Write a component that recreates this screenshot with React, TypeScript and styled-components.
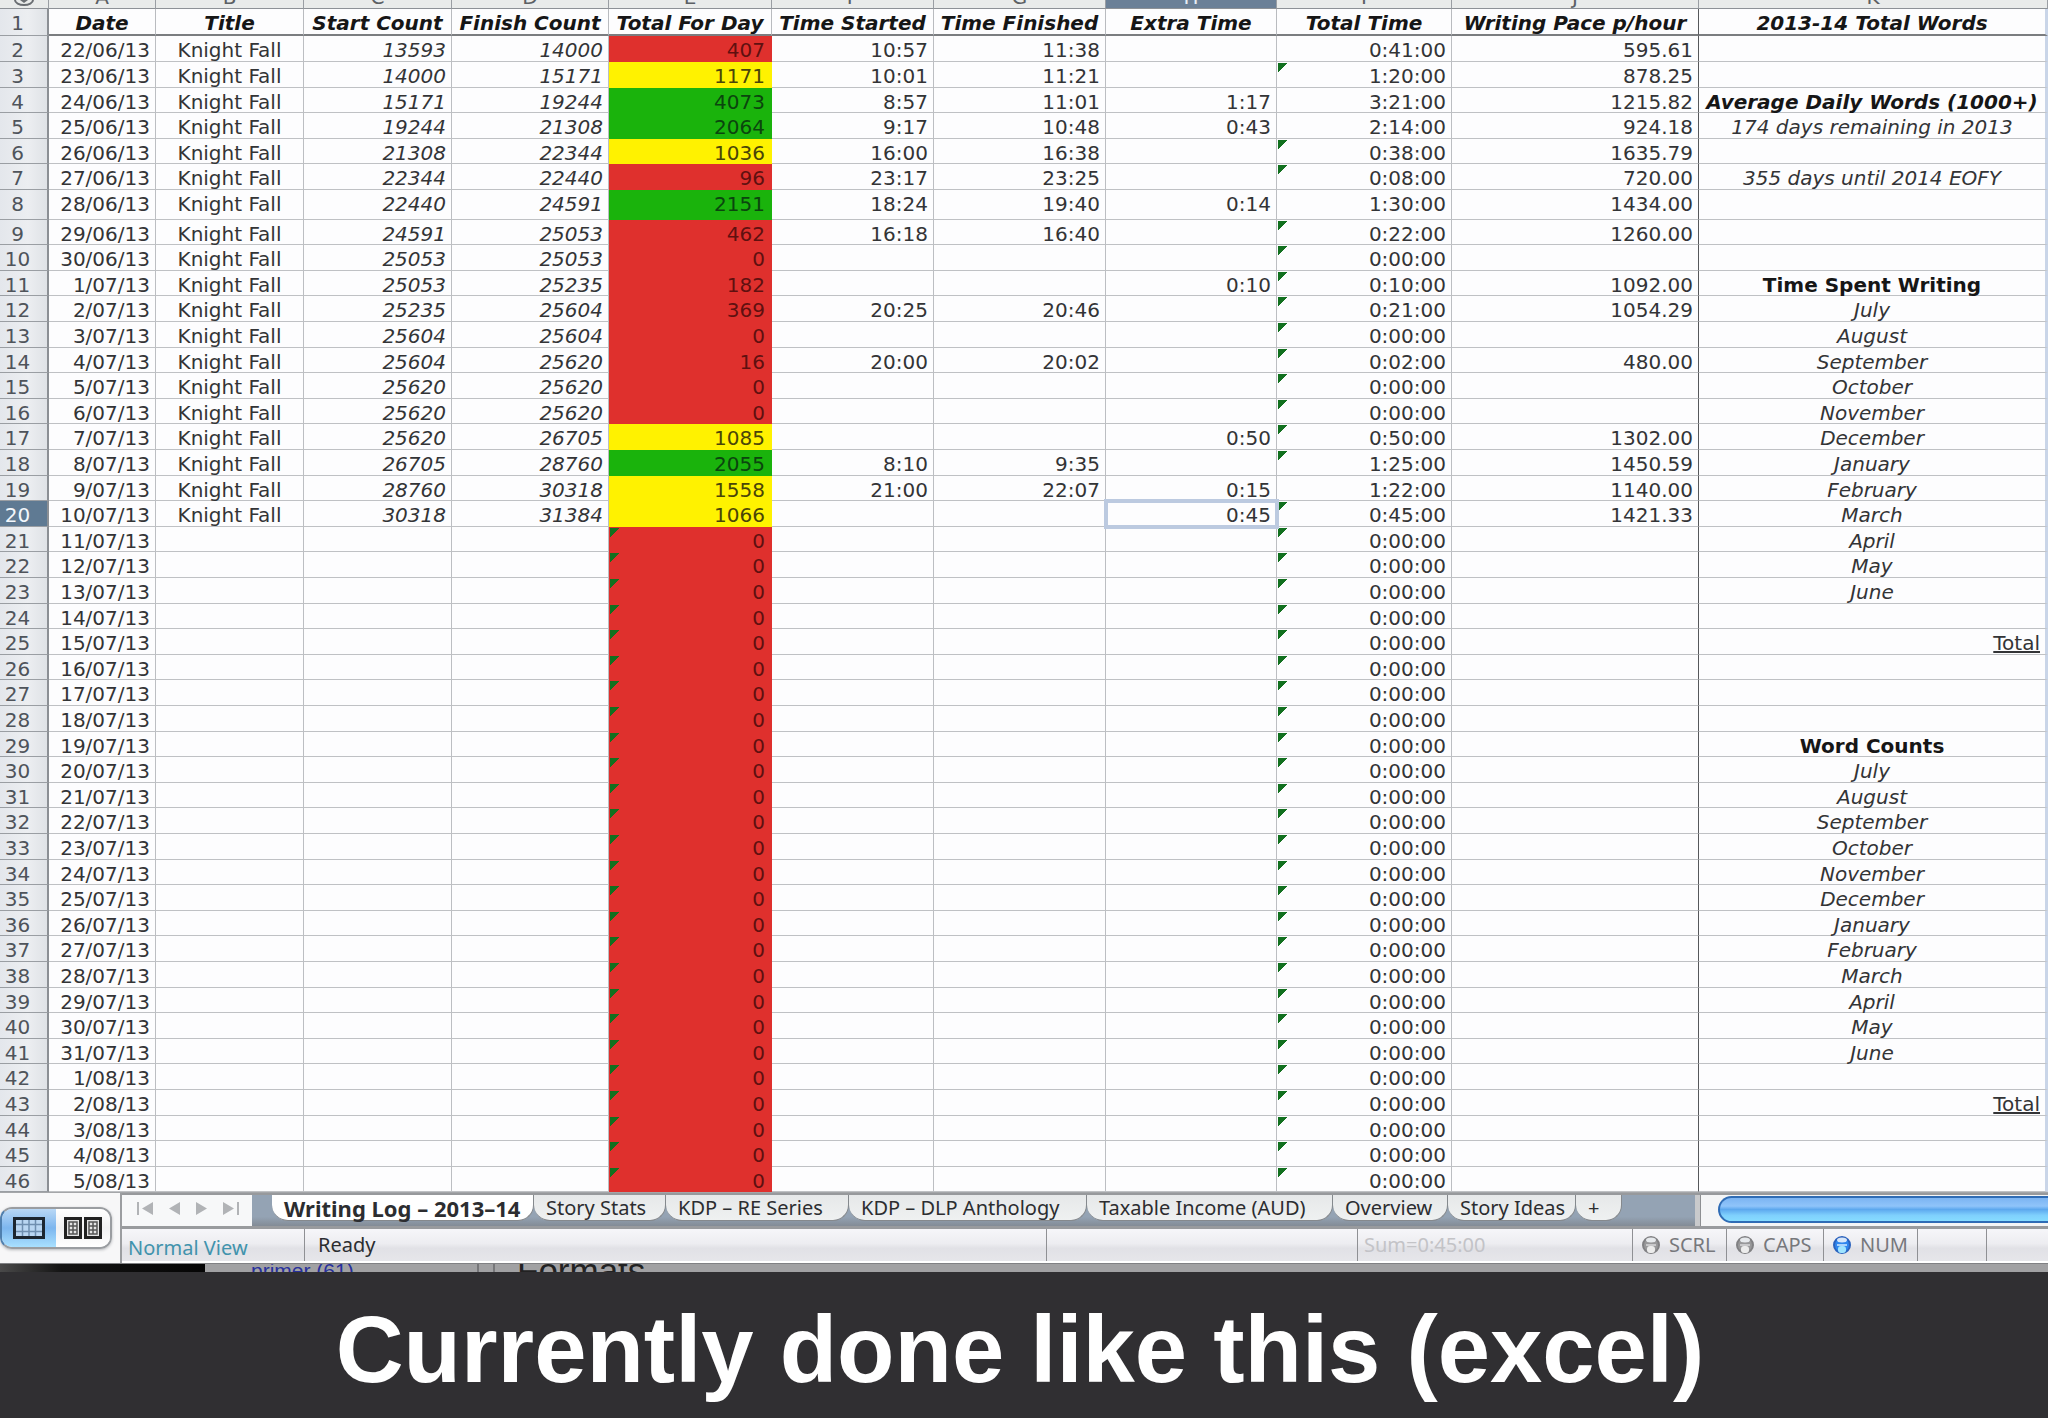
import React from "react";
import styled, { createGlobalStyle, css } from "styled-components";

const GlobalStyle = createGlobalStyle`
  *, *::before, *::after { box-sizing: border-box; }
  body { margin: 0; background: #302f32; }
  button { font: inherit; color: inherit; border: 0; padding: 0; background: none; }
`;

const sheetFont = `"DejaVu Sans", Verdana, sans-serif`;
const chromeFont = `"Noto Sans", "Lucida Grande", sans-serif`;

type Align = "left" | "center" | "right";
type Fill = "red" | "yellow" | "green";

const fills: Record<Fill, { back: string; ink: string }> = {
  red: { back: "#df302d", ink: "#5f1010" },
  yellow: { back: "#fff200", ink: "#4a4508" },
  green: { back: "#1ab30c", ink: "#0b450e" },
};

const Page = styled.main`
  display: flex;
  flex-direction: column;
  min-height: 100vh;
  overflow: hidden;
`;

/* ---------- sheet ---------- */

const Sheet = styled.table`
  width: 100%;
  table-layout: fixed;
  border-collapse: separate;
  border-spacing: 0;
  background: #fdfdfe;
  color: #333436;
  font: 20px/20px ${sheetFont};
  white-space: nowrap;
`;

const Column = styled.col<{ $width?: number }>`
  width: ${(p) => (p.$width ? `${p.$width}px` : "auto")};
`;

const Letter = styled.th<{ $active?: boolean }>`
  height: 9px;
  padding: 0;
  border-right: 1px solid #9a9ea3;
  border-bottom: 1px solid #8d9196;
  background: ${(p) => (p.$active ? "#6b8097" : "#e9ebea")};
  color: ${(p) => (p.$active ? "#e8eef5" : "#5c6064")};
  font-weight: 400;
`;

const LetterClip = styled.div`
  display: flex;
  align-items: flex-end;
  justify-content: center;
  height: 8px;
  overflow: hidden;
  line-height: 22px;
`;

const RowNumber = styled.th<{ $active?: boolean }>`
  padding: 4px 12px 0 0;
  border-right: 2px solid #8b8f94;
  border-bottom: 1px solid #9a9ea3;
  background: ${(p) => (p.$active ? "#5f7a93" : "linear-gradient(90deg, #e4e7ec, #eceef1 60%, #dfe2e6)")};
  color: ${(p) => (p.$active ? "#f3f7fb" : "#4f545b")};
  font-weight: 400;
  text-align: center;
  vertical-align: top;
`;

const Title = styled.th`
  padding: 4px 0 0;
  border-right: 1px solid #b9bbbf;
  border-bottom: 2px solid #7b7d80;
  color: #161616;
  font-weight: 700;
  font-style: italic;
  text-align: center;
  vertical-align: top;
  &:nth-last-child(2) { border-right-color: #56585b; }
  &:last-child { border-right: 3px solid #c9d5e8; }
`;

const Cell = styled.td<{
  $align?: Align;
  $italic?: boolean;
  $bold?: boolean;
  $underline?: boolean;
  $fill?: Fill;
  $flag?: boolean;
  $selected?: boolean;
  $edge?: boolean;
}>`
  padding: 4px 5px 0;
  border-right: 1px solid ${(p) => (p.$edge ? "#56585b" : "#bcbec2")};
  border-bottom: 1px solid #bfc1c4;
  text-align: ${(p) => p.$align ?? "right"};
  vertical-align: top;
  font-style: ${(p) => (p.$italic ? "italic" : "normal")};
  font-weight: ${(p) => (p.$bold ? 700 : 400)};
  text-decoration: ${(p) => (p.$underline ? "underline" : "none")};
  &:last-child { border-right: 3px solid #c9d5e8; }
  ${(p) => p.$bold && css`color: #161616;`}
  ${(p) =>
    p.$fill &&
    css`
      padding-right: 6px;
      background-color: ${fills[p.$fill].back};
      border-color: ${fills[p.$fill].back};
      color: ${fills[p.$fill].ink};
    `}
  ${(p) =>
    p.$flag &&
    css`
      background-image: linear-gradient(135deg, #12701f 7px, transparent 7px);
      background-repeat: no-repeat;
      background-size: 10px 10px;
      background-position: 1px 1px;
    `}
  ${(p) =>
    p.$selected &&
    css`
      outline: 4px solid #bccae0;
      outline-offset: -2px;
    `}
`;

const Row = styled.tr<{ $tall?: boolean }>`
  height: ${(p) => (p.$tall ? 30 : 26)}px;
  &:nth-child(5n),
  &:nth-child(5n + 3) { height: 25px; }
`;

const TitleRow = styled.tr`
  height: 27px;
`;

/* ---------- footer ---------- */

const Footer = styled.footer`
  display: grid;
  grid-template-columns: 122px 1fr;
  grid-template-rows: 36px 34px;
  border-top: 1px solid #a4a6a9;
  color: #2c2d30;
  font: 20px/26px ${chromeFont};
  white-space: nowrap;
`;

const ViewPanel = styled.div`
  grid-row: 1 / 3;
  display: flex;
  align-items: center;
  border-right: 2px solid #9b9da0;
  background: #f7f7f8;
`;

const ViewSwitch = styled.div`
  display: flex;
  width: 112px;
  height: 42px;
  border: 2px solid #9a9da1;
  border-left-color: #4f7fae;
  border-radius: 12px;
  overflow: hidden;
  box-shadow: 0 1px 3px #b5b7ba;
`;

const ViewButton = styled.button<{ $on?: boolean }>`
  flex: 1;
  display: grid;
  place-items: center;
  background: ${(p) =>
    p.$on
      ? "linear-gradient(#b9d8f6, #7db6ee 50%, #a8e0ff)"
      : "linear-gradient(#ffffff, #f1f1f2 50%, #ffffff)"};
`;

const TabBar = styled.div`
  display: flex;
  align-items: stretch;
  min-width: 0;
  border-top: 2px solid #97999c;
  border-bottom: 3px solid #999b9e;
  background: #94a3b4;
`;

const PageButtons = styled.div`
  display: flex;
  align-items: center;
  justify-content: space-between;
  width: 130px;
  padding: 0 12px 4px 14px;
  background: #f7f8f9;
  color: #b1b3b6;
`;

const PageButton = styled.button`
  display: flex;
`;

const Tabs = styled.nav`
  display: flex;
  flex: 1;
  min-width: 0;
  padding: 0 0 5px 20px;
  background: linear-gradient(#94a3b4 70%, #838c96);
`;

const Tab = styled.button<{ $on?: boolean; $width: number }>`
  width: ${(p) => p.$width}px;
  padding-left: 12px;
  border-right: 1px solid #85898d;
  border-bottom: 1px solid #85898d;
  border-radius: 0 0 16px 16px;
  background: ${(p) => (p.$on ? "#ffffff" : "linear-gradient(#e6e8e9, #eff1f1)")};
  font-weight: ${(p) => (p.$on ? 700 : 400)};
  font-size: ${(p) => (p.$on ? 22 : 20)}px;
  text-align: left;
`;

const Track = styled.div`
  width: 353px;
  padding: 1px 0 1px 18px;
  border-left: 5px solid #c9cacc;
  background: #f4f5f6;
  box-shadow: inset 1px 0 0 #8d8f92;
`;

const Thumb = styled.div`
  height: 27px;
  border: 2px solid #2f6cb5;
  border-right: 0;
  border-radius: 14px 0 0 14px;
  background: linear-gradient(#7cb4f2, #8fc4fa 35%, #5da8ee 50%, #7fd0fd 75%, #86dcff);
`;

const StatusBar = styled.div`
  display: flex;
  min-width: 0;
  border-bottom: 2px solid #ffffff;
  background: linear-gradient(#f6f6f9, #ededf1 45%, #e1e1e6 60%, #e6e6ea);
`;

const StatusCell = styled.div<{ $width?: number; $tone?: string; $pad?: number }>`
  display: flex;
  align-items: center;
  gap: 8px;
  ${(p) => (p.$width ? css`width: ${p.$width}px;` : css`flex: 1;`)}
  padding-left: ${(p) => p.$pad ?? 6}px;
  border-right: 1px solid #8f9094;
  color: ${(p) => p.$tone ?? "#2c2d30"};
  &:last-child { border-right: 0; }
`;

const ViewName = styled(StatusCell)`
  align-items: flex-end;
`;

/* ---------- strip of the page behind, and caption ---------- */

const Behind = styled.div`
  display: flex;
  height: 9px;
  overflow: hidden;
  border-top: 1px solid #808184;
  background: #a1a1a3;
  font-family: "Liberation Sans", Arial, sans-serif;
  white-space: nowrap;
`;

const Photo = styled.div`
  width: 205px;
  background: linear-gradient(90deg, #4a4a4a, #141414 30%, #050505);
`;

const Peek = styled.div<{ $width: number; $pad: number; $size: number; $tone: string; $ruled?: boolean }>`
  display: flex;
  align-items: center;
  width: ${(p) => p.$width}px;
  height: 13px;
  padding-left: ${(p) => p.$pad}px;
  border-right: ${(p) => (p.$ruled ? "2px solid #77777a" : "0")};
  color: ${(p) => p.$tone};
  font-size: ${(p) => p.$size}px;
`;

const Caption = styled.h1`
  flex: 1;
  display: grid;
  place-items: center;
  min-height: 146px;
  margin: 0;
  padding: 10px 8px 0 0;
  background: #302f32;
  color: #fff;
  font: 700 94px/108px "Liberation Sans", Arial, sans-serif;
`;

/* ---------- drawings ---------- */

const GridIcon = () => (
  <svg width="32" height="22" viewBox="0 0 32 22" aria-hidden="true">
    <rect x="1.5" y="1.5" width="29" height="19" fill="#b9d6f2" stroke="#1c2630" strokeWidth="3" />
    <path d="M3 7.5h26M3 14.5h26M9.5 3v16M16 3v16M22.5 3v16" stroke="#6f8fb0" strokeWidth="1.5" />
  </svg>
);

const PagesIcon = () => (
  <svg width="38" height="22" viewBox="0 0 38 22" aria-hidden="true">
    {[0, 20].map((x) => (
      <g key={x} transform={`translate(${x} 0)`}>
        <rect x="1.5" y="1.5" width="15" height="19" fill="#e4e4e4" stroke="#222" strokeWidth="3" />
        <path d="M5 5h8v12H5zM5 9h8M5 13h8M9 5v12" fill="none" stroke="#555" strokeWidth="1.5" />
      </g>
    ))}
  </svg>
);

const ArrowIcon = ({ back, stop }: { back?: boolean; stop?: boolean }) => (
  <svg width={stop ? 17 : 11} height="13" viewBox={stop ? "0 0 17 13" : "0 0 11 13"} aria-hidden="true">
    <g transform={back ? `translate(${stop ? 17 : 11} 0) scale(-1 1)` : undefined}>
      <path d="M0 0l11 6.5L0 13z" fill="currentColor" />
      {stop && <rect x="14" width="2" height="13" fill="currentColor" />}
    </g>
  </svg>
);

const Led = ({ on }: { on?: boolean }) => (
  <svg width="20" height="20" viewBox="0 0 20 20" aria-hidden="true">
    <circle cx="10" cy="10" r="8" fill={on ? "#2f86ee" : "#98989a"} stroke={on ? "#2a62bd" : "#808083"} strokeWidth="2" />
    <ellipse cx="10" cy="5" rx="5" ry="2.5" fill="#f4f8fc" opacity=".85" />
    <rect x="6" y="11" width="8" height="7" rx="3" fill={on ? "#9fe4ff" : "#ececec"} />
    <path d="M5 10h10" stroke={on ? "#d4ecff" : "#d9d9da"} strokeWidth="1.5" />
  </svg>
);

const CornerIcon = () => (
  <svg width="20" height="8" viewBox="0 0 20 8" aria-hidden="true">
    <path d="M1 0a9 5 0 0 0 18 0" fill="none" stroke="#6a6e72" strokeWidth="2" />
    <path d="M6 0h8l-4 3z" fill="#6a6e72" />
  </svg>
);

/* ---------- data ---------- */

const letters = ["A", "B", "C", "D", "E", "F", "G", "H", "I", "J", "K"];
const widths = [49, 107, 148, 148, 157, 163, 162, 172, 171, 175, 247];
const titles = [
  "Date", "Title", "Start Count", "Finish Count", "Total For Day", "Time Started",
  "Time Finished", "Extra Time", "Total Time", "Writing Pace p/hour", "2013-14 Total Words",
];

type Entry = [start: number, finish: number, from: string, to: string, extra: string, total: string, pace: string];

const log: Entry[] = [
  [13593, 14000, "10:57", "11:38", "", "0:41:00", "595.61"],
  [14000, 15171, "10:01", "11:21", "", "1:20:00", "878.25"],
  [15171, 19244, "8:57", "11:01", "1:17", "3:21:00", "1215.82"],
  [19244, 21308, "9:17", "10:48", "0:43", "2:14:00", "924.18"],
  [21308, 22344, "16:00", "16:38", "", "0:38:00", "1635.79"],
  [22344, 22440, "23:17", "23:25", "", "0:08:00", "720.00"],
  [22440, 24591, "18:24", "19:40", "0:14", "1:30:00", "1434.00"],
  [24591, 25053, "16:18", "16:40", "", "0:22:00", "1260.00"],
  [25053, 25053, "", "", "", "0:00:00", ""],
  [25053, 25235, "", "", "0:10", "0:10:00", "1092.00"],
  [25235, 25604, "20:25", "20:46", "", "0:21:00", "1054.29"],
  [25604, 25604, "", "", "", "0:00:00", ""],
  [25604, 25620, "20:00", "20:02", "", "0:02:00", "480.00"],
  [25620, 25620, "", "", "", "0:00:00", ""],
  [25620, 25620, "", "", "", "0:00:00", ""],
  [25620, 26705, "", "", "0:50", "0:50:00", "1302.00"],
  [26705, 28760, "8:10", "9:35", "", "1:25:00", "1450.59"],
  [28760, 30318, "21:00", "22:07", "0:15", "1:22:00", "1140.00"],
  [30318, 31384, "", "", "0:45", "0:45:00", "1421.33"],
];

const months = [
  "July", "August", "September", "October", "November", "December",
  "January", "February", "March", "April", "May", "June",
];

interface Note {
  text: string;
  bold?: boolean;
  italic?: boolean;
  total?: boolean;
}

const notes: Record<number, Note> = {
  4: { text: "Average Daily Words (1000+)", bold: true, italic: true },
  5: { text: "174 days remaining in 2013", italic: true },
  7: { text: "355 days until 2014 EOFY", italic: true },
  11: { text: "Time Spent Writing", bold: true },
  25: { text: "Total", total: true },
  29: { text: "Word Counts", bold: true },
  43: { text: "Total", total: true },
};
months.forEach((month, i) => {
  notes[12 + i] = { text: month, italic: true };
  notes[30 + i] = { text: month, italic: true };
});

const dateFor = (row: number) => {
  const day = new Date(2013, 5, 20 + row);
  return `${day.getDate()}/0${day.getMonth() + 1}/13`;
};

const fillFor = (words: number): Fill => (words >= 2000 ? "green" : words >= 1000 ? "yellow" : "red");

const unflagged = [2, 4, 5, 8, 19];
const currentRow = 20;
const rows = Array.from({ length: 45 }, (_, i) => i + 2);

const sheets: [name: string, width: number][] = [
  ["Writing Log – 2013–14", 262],
  ["Story Stats", 132],
  ["KDP – RE Series", 183],
  ["KDP – DLP Anthology", 238],
  ["Taxable Income (AUD)", 246],
  ["Overview", 115],
  ["Story Ideas", 128],
  ["+", 46],
];

const LogRow = ({ row }: { row: number }) => {
  const entry = log[row - 2];
  const words = entry ? entry[1] - entry[0] : 0;
  const note = notes[row];
  return (
    <Row $tall={row === 8}>
      <RowNumber scope="row" $active={row === currentRow}>{row}</RowNumber>
      <Cell>{dateFor(row)}</Cell>
      <Cell $align="center">{entry && "Knight Fall"}</Cell>
      <Cell $italic>{entry?.[0]}</Cell>
      <Cell $italic>{entry?.[1]}</Cell>
      <Cell $fill={fillFor(words)} $flag={!entry}>{words}</Cell>
      <Cell>{entry?.[2]}</Cell>
      <Cell>{entry?.[3]}</Cell>
      <Cell $selected={row === currentRow}>{entry?.[4]}</Cell>
      <Cell $flag={!unflagged.includes(row)}>{entry ? entry[5] : "0:00:00"}</Cell>
      <Cell $edge>{entry?.[6]}</Cell>
      <Cell $align={note?.total ? "right" : "center"} $bold={note?.bold} $italic={note?.italic} $underline={note?.total}>
        {note?.text}
      </Cell>
    </Row>
  );
};

export default function App() {
  return (
    <Page>
      <GlobalStyle />
      <Sheet>
        <colgroup>
          {widths.map((w, i) => <Column key={i} $width={w} />)}
          <Column />
        </colgroup>
        <thead>
          <tr>
            <Letter><LetterClip><CornerIcon /></LetterClip></Letter>
            {letters.map((l) => (
              <Letter key={l} scope="col" $active={l === "H"}><LetterClip>{l}</LetterClip></Letter>
            ))}
          </tr>
          <TitleRow>
            <RowNumber scope="row">1</RowNumber>
            {titles.map((t) => <Title key={t} scope="col">{t}</Title>)}
          </TitleRow>
        </thead>
        <tbody>
          {rows.map((row) => <LogRow key={row} row={row} />)}
        </tbody>
      </Sheet>

      <Footer>
        <ViewPanel>
          <ViewSwitch>
            <ViewButton $on aria-label="Normal view"><GridIcon /></ViewButton>
            <ViewButton aria-label="Page layout view"><PagesIcon /></ViewButton>
          </ViewSwitch>
        </ViewPanel>
        <TabBar>
          <PageButtons>
            <PageButton aria-label="First sheet"><ArrowIcon back stop /></PageButton>
            <PageButton aria-label="Previous sheet"><ArrowIcon back /></PageButton>
            <PageButton aria-label="Next sheet"><ArrowIcon /></PageButton>
            <PageButton aria-label="Last sheet"><ArrowIcon stop /></PageButton>
          </PageButtons>
          <Tabs>
            {sheets.map(([name, width], i) => (
              <Tab key={name} $on={i === 0} $width={width}>{name}</Tab>
            ))}
          </Tabs>
          <Track><Thumb /></Track>
        </TabBar>
        <StatusBar>
          <ViewName $width={183} $tone="#4193ad">Normal View</ViewName>
          <StatusCell $pad={13}>Ready</StatusCell>
          <StatusCell $width={311} />
          <StatusCell $width={275} $tone="#c3c3c7">Sum=0:45:00</StatusCell>
          <StatusCell $width={94} $tone="#77787c" $pad={8}><Led />SCRL</StatusCell>
          <StatusCell $width={97} $tone="#77787c" $pad={8}><Led />CAPS</StatusCell>
          <StatusCell $width={94} $tone="#77787c" $pad={8}><Led on />NUM</StatusCell>
          <StatusCell $width={69} />
          <StatusCell $width={61} />
        </StatusBar>
      </Footer>

      <Behind>
        <Photo />
        <Peek $width={274} $pad={46} $size={21} $tone="#27309c" $ruled>primer (61)</Peek>
        <Peek $width={16} $pad={0} $size={21} $tone="#222" $ruled />
        <Peek $width={300} $pad={22} $size={35} $tone="#222">Formats</Peek>
      </Behind>
      <Caption>Currently done like this (excel)</Caption>
    </Page>
  );
}
